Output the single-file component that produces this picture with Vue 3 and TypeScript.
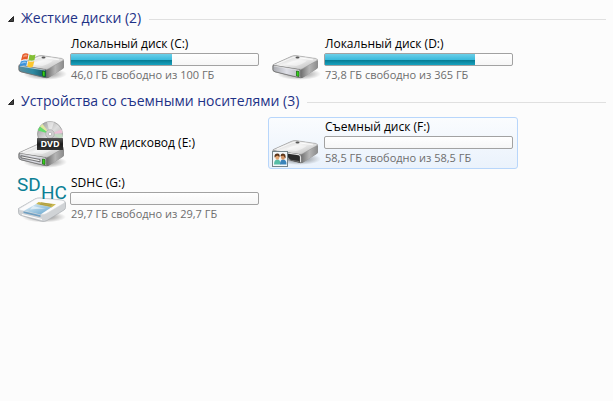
<script setup lang="ts">
import { ref } from 'vue'

type DriveKind = 'system' | 'local' | 'optical' | 'removable' | 'card'

interface Drive {
  id: string
  kind: DriveKind
  name: string
  space?: string
  used?: number
}

interface Group {
  id: string
  title: string
  open: boolean
  drives: Drive[]
}

const groups = ref<Group[]>([
  {
    id: 'hard',
    title: 'Жесткие диски',
    open: true,
    drives: [
      { id: 'C', kind: 'system', name: 'Локальный диск (C:)', space: '46,0 ГБ свободно из 100 ГБ', used: 54 },
      { id: 'D', kind: 'local', name: 'Локальный диск (D:)', space: '73,8 ГБ свободно из 365 ГБ', used: 80 },
    ],
  },
  {
    id: 'removable',
    title: 'Устройства со съемными носителями',
    open: true,
    drives: [
      { id: 'E', kind: 'optical', name: 'DVD RW дисковод (E:)' },
      { id: 'F', kind: 'removable', name: 'Съемный диск (F:)', space: '58,5 ГБ свободно из 58,5 ГБ', used: 0 },
      { id: 'G', kind: 'card', name: 'SDHC (G:)', space: '29,7 ГБ свободно из 29,7 ГБ', used: 0 },
    ],
  },
])

const selected = ref('F')

const bodyShift: Record<DriveKind, number> = { system: 0, local: 0, optical: 5, removable: 2, card: 0 }
</script>

<template>
  <main class="explorer">
    <svg class="defs" width="0" height="0" aria-hidden="true">
      <defs>
        <linearGradient id="top" x1="0" y1="0" x2="1" y2="1">
          <stop offset="0" stop-color="#bdbdbd" />
          <stop offset="0.45" stop-color="#f2f2f2" />
          <stop offset="1" stop-color="#b4b4b4" />
        </linearGradient>
        <linearGradient id="side" x1="0" y1="0" x2="1" y2="0">
          <stop offset="0" stop-color="#6c6c6c" />
          <stop offset="0.5" stop-color="#b5b5b5" />
          <stop offset="1" stop-color="#8a8a8a" />
        </linearGradient>
        <linearGradient id="front" x1="0" y1="0" x2="1" y2="0">
          <stop offset="0" stop-color="#a9abb0" />
          <stop offset="0.5" stop-color="#dfe0e8" />
          <stop offset="1" stop-color="#b7b8be" />
        </linearGradient>
        <linearGradient id="frontTeal" x1="0" y1="0" x2="1" y2="0">
          <stop offset="0" stop-color="#5d8c9c" />
          <stop offset="0.5" stop-color="#2f8ba3" />
          <stop offset="1" stop-color="#14505f" />
        </linearGradient>
        <linearGradient id="disc" x1="0" y1="0" x2="1" y2="1">
          <stop offset="0" stop-color="#8f8f8f" />
          <stop offset="0.5" stop-color="#dedede" />
          <stop offset="1" stop-color="#a0a0a0" />
        </linearGradient>
        <linearGradient id="label" x1="0" y1="0" x2="0" y2="1">
          <stop offset="0" stop-color="#5a5a5a" />
          <stop offset="0.5" stop-color="#1c1c1c" />
          <stop offset="1" stop-color="#333" />
        </linearGradient>
        <linearGradient id="picture" x1="0" y1="0" x2="1" y2="1">
          <stop offset="0" stop-color="#e2f0f8" />
          <stop offset="1" stop-color="#62a3cc" />
        </linearGradient>
        <radialGradient id="shadow">
          <stop offset="0" stop-color="#000" stop-opacity="0.5" />
          <stop offset="1" stop-color="#000" stop-opacity="0" />
        </radialGradient>
      </defs>
    </svg>

    <section v-for="group in groups" :key="group.id" class="group">
      <h2 class="heading">
        <button
          class="toggle"
          type="button"
          :aria-expanded="group.open"
          :aria-controls="'list-' + group.id"
          @click="group.open = !group.open"
        >
          <svg class="arrow" :class="{ closed: !group.open }" viewBox="0 0 7 7" aria-hidden="true">
            <path d="M6.5 1.5V6.5H1.5Z" fill="#404040" stroke="#262626" stroke-width="1" stroke-linejoin="round" />
          </svg>
          <span>{{ group.title }} ({{ group.drives.length }})</span>
        </button>
        <span class="rule"></span>
      </h2>

      <ul v-show="group.open" :id="'list-' + group.id" class="tiles">
        <li v-for="drive in group.drives" :key="drive.id">
          <button
            type="button"
            class="tile"
            :class="{ selected: selected === drive.id }"
            :aria-pressed="selected === drive.id"
            @click="selected = drive.id"
          >
            <svg class="icon" viewBox="0 0 48 48" aria-hidden="true">
              <!-- disc behind an optical drive -->
              <g v-if="drive.kind === 'optical'">
                <circle cx="32" cy="15" r="12.5" fill="url(#disc)" stroke="#8f8f8f" stroke-width="0.7" />
                <path d="M32 15L20 11.500A12.500 12.500 0 0 1 22 7.500Z" fill="#63dc6a" />
                <path d="M32 15L22 7.500A12.500 12.500 0 0 1 24.500 5Z" fill="#dfe8a0" />
                <path d="M32 15L43.500 10.500A12.500 12.500 0 0 1 44.500 14Z" fill="#ecc0d6" />
                <path d="M32 15L44.500 15.500A12.500 12.500 0 0 1 43.500 20Z" fill="#c2dcc2" />
                <path d="M32 15L29 3A12.500 12.500 0 0 1 36 3.200Z" fill="#fff" opacity="0.5" />
                <circle cx="32" cy="15" r="4.300" fill="#cfcfcf" stroke="#a5a5a5" stroke-width="0.600" />
                <circle cx="32" cy="15" r="1.700" fill="#fff" stroke="#999" stroke-width="0.500" />
              </g>

              <!-- drive body -->
              <g v-if="drive.kind !== 'card'" :transform="`translate(0 ${bodyShift[drive.kind]})`">
                <ellipse cx="27" cy="38" rx="22" ry="6" fill="url(#shadow)" />
                <path d="M1 28.500L19 20.500Q21.500 19.300 24 19.600L43.500 22.400Q46 23 46 25V30.500Q46 32 44.500 33L31 41.500Q29.500 42.500 27.500 42L2.500 36Q0.500 35.300 0.500 33.500V30Q0.500 29 1 28.500Z" fill="#8f8f8f" />
                <path d="M28.500 33.500L46 24.500V30.500Q46 32 44.500 33L31 41.500Q30 42.300 28.500 42Z" fill="url(#side)" />
                <path d="M1.500 28.500L19 20.500Q21.500 19.300 24 19.600L43.500 22.400Q46.500 23.200 45 24.500L30.500 32.800Q29 33.700 27 33.200L2 29.500Q0.500 29 1.500 28.500Z" fill="url(#top)" stroke="#999" stroke-width="0.500" />
                <path d="M5 28L20 21.800Q22 21 24 21.300L41 23.800" fill="none" stroke="#fff" stroke-width="0.900" opacity="0.800" />
                <path d="M14 28.500Q20 23 35 24.500Q31 28 24 30Z" fill="#fff" opacity="0.450" />
                <ellipse cx="25.500" cy="21.500" rx="2" ry="0.900" fill="#565656" />
                <template v-if="drive.kind === 'removable'">
                  <path d="M1 29.500L27 33Q29 33.500 29 35V42L19 39.500L14 34L2 32Z" fill="#2a2a2a" />
                  <path d="M1 30L26.500 33.600Q28.500 34 28.500 36V41.500" fill="none" stroke="#e2e2e2" stroke-width="1.200" />
                  <path d="M17 38.500L27.500 40V41.500L19 39.500Z" fill="#6a6a6a" />
                </template>
                <template v-else>
                  <path d="M1 30Q1 29.400 2 29.500L27 33.700Q28.500 34 28.500 35V40.500Q28.500 42 27 41.600L3 35.800Q1 35.300 1 33.500Z" :fill="drive.kind === 'system' ? 'url(#frontTeal)' : 'url(#front)'" stroke="#707070" stroke-width="0.800" />
                  <path d="M2 30L27 34.200" fill="none" stroke="#fff" stroke-width="0.700" opacity="0.850" />
                  <path v-if="drive.kind === 'optical'" d="M3 31.800L22 35.500V37.800L3 33.800Z" fill="#eee" stroke="#555" stroke-width="0.800" />
                  <path d="M24.500 35L27 35.500V40.500L24.500 39.900Z" fill="#35d21c" stroke="#17610d" stroke-width="0.700" />
                </template>
              </g>

              <!-- Windows flag -->
              <g v-if="drive.kind === 'system'">
                <path d="M4.500 18.500Q7.500 16.300 10.500 18L9.500 23.500Q6.500 22.500 3 24.500Z" fill="#e65a26" />
                <path d="M11.500 18.400Q14.500 20 17.500 18.500L16.500 24Q13.500 25.500 10.500 24Z" fill="#84bf36" />
                <path d="M2.800 25.500Q6 23.700 9.300 24.800L8.300 30Q5 29 1.500 30.500Z" fill="#3992dc" />
                <path d="M10.300 25Q13.300 26.700 16.300 25L15 30.500Q12 32.300 9.200 30.600Z" fill="#fcc62f" />
                <path d="M5.500 19.500Q7.500 18 9.500 19L9 20.500Q7 20 5 21.500Z" fill="#fff" opacity="0.400" />
                <path d="M3.500 26.500Q6 25 8.500 26L8 27.200Q6 26.700 3.300 28Z" fill="#fff" opacity="0.450" />
              </g>

              <!-- black DVD plate -->
              <g v-if="drive.kind === 'optical'">
                <rect x="19" y="19" width="26" height="12" rx="0.500" fill="url(#label)" />
                <text class="dvd" x="32" y="28" text-anchor="middle">DVD</text>
              </g>

              <!-- shared-folder badge -->
              <g v-if="drive.kind === 'removable'">
                <rect x="0.500" y="32.500" width="15" height="15" fill="#f4f8fa" stroke="#75848a" />
                <path d="M2 45.500Q2 40.500 5.500 40.500Q8.500 40.500 8.500 45.500Z" fill="#57bda6" />
                <path d="M8 45.500Q8 40.500 11 40.500Q14.500 40.500 14.500 45.500Z" fill="#3a83ba" />
                <ellipse cx="5.300" cy="38.200" rx="2" ry="2.600" fill="#e5a773" />
                <ellipse cx="11" cy="38.200" rx="2" ry="2.600" fill="#d69463" />
                <path d="M2.500 38.500Q2 34.500 5.500 34.500Q8.200 34.700 7.600 38L5.200 36.600Z" fill="#5b3418" />
                <path d="M8.500 37.500Q8.500 34.500 11 34.500Q14.200 34.700 13.500 39.500L11.300 36.600Z" fill="#5b3418" />
              </g>

              <!-- SDHC card reader -->
              <g v-if="drive.kind === 'card'">
                <ellipse cx="26" cy="42" rx="22" ry="5.500" fill="url(#shadow)" />
                <path d="M0.500 33.500L17 24Q19 22.800 22 23L43.500 25Q47.500 25.700 47.500 28V32.500Q47.500 34 46 35L29 45.500Q26.500 47 23.500 46.300L3 40.500Q0.500 39.600 0.500 37.500Z" fill="#d0d3d6" stroke="#a9adb1" stroke-width="0.700" />
                <path d="M1.500 33.500L17 24.300Q19 23 22 23.200L43.500 25.200Q48.500 26 45.500 28.500L28.500 38.500Q26 40 23.500 39.300L3 35.500Q0 34.600 1.500 33.500Z" fill="#fbfbfc" stroke="#d2d5d8" stroke-width="0.600" />
                <path d="M20.500 27L38 29.200L33.500 32.500L17.500 29.500Z" fill="#c9b853" />
                <path d="M23 27.800L34 29.700M21.500 29L33 31" stroke="#9b8c38" stroke-width="0.600" />
                <path d="M18 29L33.500 32.200L22.500 39.500L6 35.700Z" fill="url(#picture)" />
                <path d="M15 31L28 34Q20 33.500 12 34.500Z" fill="#fff" opacity="0.550" />
                <path d="M5.500 36.300L22.500 40.200V42L5.500 38Z" fill="#6f9fc2" />
                <path d="M4 39.500L24 44.500" stroke="#fff" stroke-width="1.200" />
                <text class="sdhc" x="-1" y="16">SD</text>
                <text class="sdhc" x="23" y="24">HC</text>
              </g>
            </svg>

            <span class="info">
              <span class="name">{{ drive.name }}</span>
              <span
                v-if="drive.used !== undefined"
                class="bar"
                role="meter"
                aria-valuemin="0"
                aria-valuemax="100"
                :aria-valuenow="drive.used"
                :aria-label="drive.name"
              >
                <span class="fill" :style="{ width: drive.used + '%' }"></span>
              </span>
              <span v-if="drive.space" class="space">{{ drive.space }}</span>
            </span>
          </button>
        </li>
      </ul>
    </section>
  </main>
</template>

<style>
body {
  background: #fcfcfc;
}
</style>

<style scoped>
.explorer {
  display: flex;
  flex-direction: column;
  gap: 1px;
  padding: 4px 7px;
  font-family: 'Open Sans', 'Noto Sans', sans-serif;
  font-size: 12px;
  color: #000;
}

.defs {
  position: absolute;
}

.heading {
  display: flex;
  align-items: center;
  gap: 8px;
  height: 30px;
  margin: 0;
  font-weight: 400;
}

.toggle {
  display: flex;
  align-items: center;
  gap: 7px;
  padding: 0 0 2px;
  border: 0;
  background: none;
  font: inherit;
  font-size: 14px;
  line-height: 20px;
  color: #1e3287;
  white-space: nowrap;
}

.arrow {
  width: 7px;
  height: 7px;
}

.arrow.closed {
  transform: rotate(-45deg);
}

.rule {
  flex: 1;
  height: 1px;
  background: #e0e0e0;
}

.tiles {
  display: grid;
  grid-template-columns: repeat(auto-fill, 250px);
  gap: 4px;
  margin: 0;
  padding: 0 0 0 7px;
  list-style: none;
}

.tile {
  box-sizing: border-box;
  display: flex;
  align-items: center;
  gap: 4px;
  width: 100%;
  height: 52px;
  padding: 0 4px 0 3px;
  border: 1px solid transparent;
  border-radius: 3px;
  background: none;
  font: inherit;
  color: inherit;
  text-align: left;
}

.tile.selected {
  border-color: #b8d6fb;
  background: linear-gradient(#fafcfe, #eaf2fc);
}

.icon {
  flex: none;
  width: 48px;
  height: 48px;
  overflow: visible;
}

.dvd {
  font: 700 9px 'Open Sans', sans-serif;
  fill: #fff;
}

.sdhc {
  font: 19px Roboto, sans-serif;
  fill: #0b7f95;
}

.info {
  display: flex;
  flex: 1;
  flex-direction: column;
  min-width: 0;
}

.name,
.space {
  padding-left: 1px;
  line-height: 16px;
  white-space: nowrap;
}

.space {
  padding-bottom: 1px;
  font-size: 11px;
  color: #6d6d6d;
}

.bar {
  box-sizing: border-box;
  height: 13px;
  margin: 1px 0;
  border: 1px solid #a2a2a2;
  border-radius: 2px;
  background: linear-gradient(#fff, #f6f6f6);
}

.fill {
  display: block;
  height: 100%;
  background: linear-gradient(#6ccfe8 0%, #3cbbdc 50%, #05788f 51%, #18a3c0 100%);
}
</style>
